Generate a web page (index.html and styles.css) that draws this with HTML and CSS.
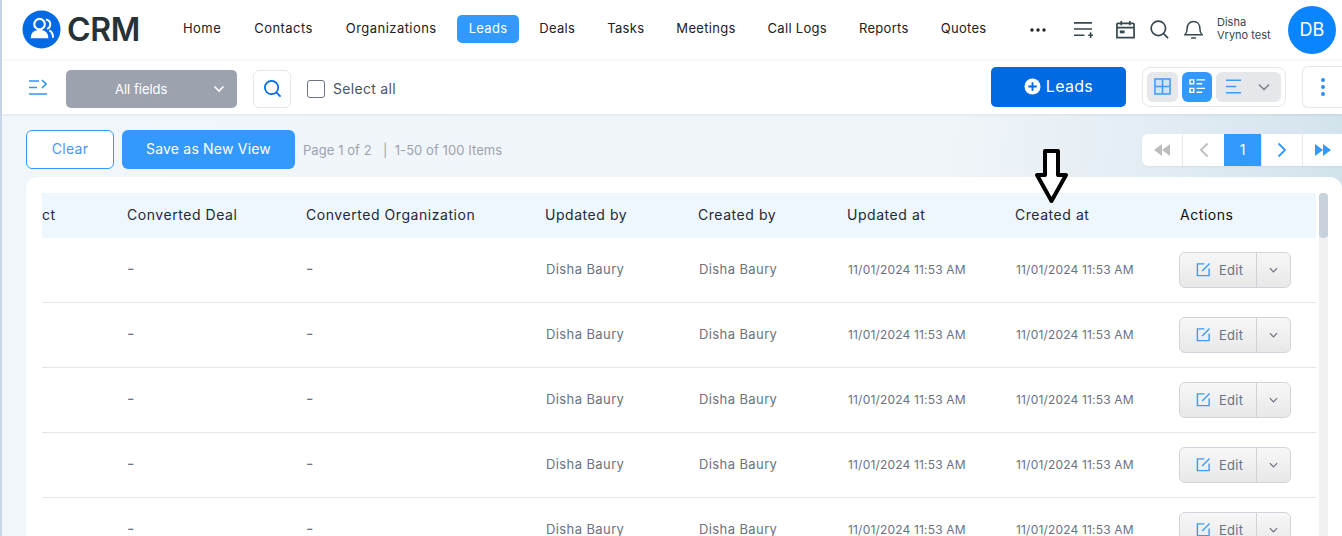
FILE: index.html
```html
<!DOCTYPE html>
<html lang="en">
<head>
<meta charset="utf-8">
<title>CRM Leads</title>
<link rel="stylesheet" href="styles.css">
</head>
<body>
<div class="page">
  <header class="topbar">
    <div class="logo">
      <svg class="logo-mark" viewBox="0 0 40 40"><circle cx="20" cy="20" r="19.5" fill="#0069e4"/><circle cx="18" cy="14.5" r="5.4" fill="none" stroke="#fff" stroke-width="2.2"/><path d="M9 29c0-6 3.500-8.500 9-8.500s9 2.500 9 8.500z" fill="#fff"/><path d="M24.500 9.800c3 .6 4.500 2.500 4.500 4.800s-1.300 4-3.300 4.700M28 21c2.600 1 3.800 3.500 3.800 7.500" fill="none" stroke="#fff" stroke-width="2"/></svg>
      <span class="logo-text">CRM</span>
    </div>
    <nav class="nav">
      <a class="nav-item">Home</a><a class="nav-item">Contacts</a><a class="nav-item">Organizations</a><a class="nav-item active">Leads</a><a class="nav-item">Deals</a><a class="nav-item">Tasks</a><a class="nav-item">Meetings</a><a class="nav-item">Call Logs</a><a class="nav-item">Reports</a><a class="nav-item">Quotes</a>
    </nav>
    <div class="top-tools">
      <svg class="more" viewBox="0 0 16 4"><circle cx="2" cy="2" r="1.700"/><circle cx="8" cy="2" r="1.700"/><circle cx="14" cy="2" r="1.700"/></svg>
      <svg class="tool tool-add" viewBox="0 0 20 20"><path d="M0 3h19M0 9.500h19M0 16h11M15 16h5M17.500 13v6" fill="none" stroke="#37474f" stroke-width="1.700"/></svg>
      <svg class="tool tool-cal" viewBox="0 0 20 20"><path d="M2 3.500h16a1 1 0 0 1 1 1v14H1v-14a1 1 0 0 1 1-1zM1 8h18M5.500 1v4.500M14.500 1v4.500" fill="none" stroke="#37474f" stroke-width="1.800"/><rect x="4" y="11" width="5" height="3" fill="#37474f"/></svg>
      <svg class="tool tool-search" viewBox="0 0 20 20"><circle cx="8.800" cy="8.800" r="7.600" fill="none" stroke="#37474f" stroke-width="1.800"/><path d="M14.500 14.500L19 19" stroke="#37474f" stroke-width="1.800"/></svg>
      <svg class="tool tool-bell" viewBox="0 0 20 20"><path d="M1 15.500c1.700-1.500 2.300-3 2.300-6.500 0-4.500 2.700-7.500 6.700-7.500s6.700 3 6.700 7.500c0 3.500.6 5 2.300 6.500zM7.500 19h5" fill="none" stroke="#37474f" stroke-width="1.600"/></svg>
      <div class="user-name">Disha<br>Vryno test</div>
      <div class="avatar">DB</div>
    </div>
  </header>

  <section class="toolbar">
    <div class="toolbar-left">
      <svg class="side-toggle" viewBox="0 0 18 16"><path d="M0 2h10M0 8.500h8M0 15h18M13 1l4 4-4 4" fill="none" stroke="#2f95fb" stroke-width="1.600"/></svg>
      <div class="field-select"><span>All fields</span><svg viewBox="0 0 12 8"><path d="M1.500 1.500L6 6l4.500-4.500" fill="none" stroke="#fff" stroke-width="1.600"/></svg></div>
      <button class="icon-btn"><svg viewBox="0 0 20 20"><circle cx="9" cy="9" r="7" fill="none" stroke="#0069e4" stroke-width="1.800"/><path d="M14 14l4.500 4.500" stroke="#0069e4" stroke-width="1.800"/></svg></button>
      <label class="select-all"><span class="checkbox"></span>Select all</label>
    </div>
    <div class="toolbar-right">
      <button class="add-btn"><svg viewBox="0 0 18 18"><circle cx="9" cy="9" r="8.500" fill="#fff"/><path d="M9 4.500v9M4.500 9h9" stroke="#0069e4" stroke-width="2"/></svg>Leads</button>
      <div class="view-group">
        <span class="view-btn"><svg viewBox="0 0 18 18"><path d="M1 1h16v16H1zM1 9h16M9 1v16" fill="#cfe4fb" stroke="#3d9bfa" stroke-width="1.600"/></svg></span>
        <span class="view-btn on"><svg viewBox="0 0 18 18"><path d="M1 2h4v4H1zM1 11h4v4H1zM8 2h9M8 6h6M8 11h9M8 15h6" fill="none" stroke="#fff" stroke-width="1.500"/></svg></span>
        <span class="view-btn wide"><svg viewBox="0 0 18 16"><path d="M1 1.500h16M1 8h11M1 14.500h16" fill="none" stroke="#3d9bfa" stroke-width="1.600"/></svg><svg class="wide-chev" viewBox="0 0 12 8"><path d="M1 1.500L6 6.500l5-5" fill="none" stroke="#7d8590" stroke-width="1.600"/></svg></span>
      </div>
      <button class="kebab"><svg viewBox="0 0 4 20"><circle cx="2" cy="3" r="2"/><circle cx="2" cy="10" r="2"/><circle cx="2" cy="17" r="2"/></svg></button>
    </div>
  </section>

  <main class="content">
    <div class="action-row">
      <button class="btn-clear">Clear</button>
      <button class="btn-save">Save as New View</button>
      <span class="page-info">Page 1 of 2 &nbsp;&nbsp;|&nbsp; 1-50 of 100 Items</span>
      <div class="pager">
        <span class="pg pg-first"><svg viewBox="0 0 18 12"><path d="M9 0v12L1 6zM17 0v12L9 6z" fill="#bdbdbd"/></svg></span>
        <span class="pg pg-prev"><svg viewBox="0 0 10 16"><path d="M8.500 1.500L2 8l6.500 6.500" fill="none" stroke="#bdbdbd" stroke-width="1.800"/></svg></span>
        <span class="pg current">1</span>
        <span class="pg pg-next"><svg viewBox="0 0 10 16"><path d="M1.500 1.500L8 8l-6.500 6.500" fill="none" stroke="#3399ff" stroke-width="1.800"/></svg></span>
        <span class="pg pg-last"><svg viewBox="0 0 18 12"><path d="M1 0v12l8-6zM9 0v12l8-6z" fill="#3399ff"/></svg></span>
      </div>
    </div>

    <div class="card">
      <div class="table">
        <div class="row head">
          <div class="cell">ct</div><div class="cell">Converted Deal</div><div class="cell">Converted Organization</div><div class="cell">Updated by</div><div class="cell">Created by</div><div class="cell">Updated at</div><div class="cell">Created at</div><div class="cell actions-head">Actions</div>
        </div>
        <div class="row">
          <div class="cell"></div><div class="cell dash">-</div><div class="cell dash">-</div><div class="cell name">Disha Baury</div><div class="cell name">Disha Baury</div><div class="cell date">11/01/2024 11:53 AM</div><div class="cell date">11/01/2024 11:53 AM</div>
          <div class="cell"><div class="edit"><span class="edit-main"><svg viewBox="0 0 16 16"><path d="M9 2H1.500v12.500H14V7M6.500 9.500L14.500 1.500" fill="none" stroke="#3d9bfa" stroke-width="1.500"/></svg>Edit</span><span class="edit-more"><svg viewBox="0 0 10 6"><path d="M1 1l4 4 4-4" fill="none" stroke="#6b7280" stroke-width="1.300"/></svg></span></div></div>
        </div>
        <div class="row">
          <div class="cell"></div><div class="cell dash">-</div><div class="cell dash">-</div><div class="cell name">Disha Baury</div><div class="cell name">Disha Baury</div><div class="cell date">11/01/2024 11:53 AM</div><div class="cell date">11/01/2024 11:53 AM</div>
          <div class="cell"><div class="edit"><span class="edit-main"><svg viewBox="0 0 16 16"><path d="M9 2H1.500v12.500H14V7M6.500 9.500L14.500 1.500" fill="none" stroke="#3d9bfa" stroke-width="1.500"/></svg>Edit</span><span class="edit-more"><svg viewBox="0 0 10 6"><path d="M1 1l4 4 4-4" fill="none" stroke="#6b7280" stroke-width="1.300"/></svg></span></div></div>
        </div>
        <div class="row">
          <div class="cell"></div><div class="cell dash">-</div><div class="cell dash">-</div><div class="cell name">Disha Baury</div><div class="cell name">Disha Baury</div><div class="cell date">11/01/2024 11:53 AM</div><div class="cell date">11/01/2024 11:53 AM</div>
          <div class="cell"><div class="edit"><span class="edit-main"><svg viewBox="0 0 16 16"><path d="M9 2H1.500v12.500H14V7M6.500 9.500L14.500 1.500" fill="none" stroke="#3d9bfa" stroke-width="1.500"/></svg>Edit</span><span class="edit-more"><svg viewBox="0 0 10 6"><path d="M1 1l4 4 4-4" fill="none" stroke="#6b7280" stroke-width="1.300"/></svg></span></div></div>
        </div>
        <div class="row">
          <div class="cell"></div><div class="cell dash">-</div><div class="cell dash">-</div><div class="cell name">Disha Baury</div><div class="cell name">Disha Baury</div><div class="cell date">11/01/2024 11:53 AM</div><div class="cell date">11/01/2024 11:53 AM</div>
          <div class="cell"><div class="edit"><span class="edit-main"><svg viewBox="0 0 16 16"><path d="M9 2H1.500v12.500H14V7M6.500 9.500L14.500 1.500" fill="none" stroke="#3d9bfa" stroke-width="1.500"/></svg>Edit</span><span class="edit-more"><svg viewBox="0 0 10 6"><path d="M1 1l4 4 4-4" fill="none" stroke="#6b7280" stroke-width="1.300"/></svg></span></div></div>
        </div>
        <div class="row">
          <div class="cell"></div><div class="cell dash">-</div><div class="cell dash">-</div><div class="cell name">Disha Baury</div><div class="cell name">Disha Baury</div><div class="cell date">11/01/2024 11:53 AM</div><div class="cell date">11/01/2024 11:53 AM</div>
          <div class="cell"><div class="edit"><span class="edit-main"><svg viewBox="0 0 16 16"><path d="M9 2H1.500v12.500H14V7M6.500 9.500L14.500 1.500" fill="none" stroke="#3d9bfa" stroke-width="1.500"/></svg>Edit</span><span class="edit-more"><svg viewBox="0 0 10 6"><path d="M1 1l4 4 4-4" fill="none" stroke="#6b7280" stroke-width="1.300"/></svg></span></div></div>
        </div>
      </div>
      <div class="scrollbar"><div class="thumb"></div></div>
    </div>
  </main>
</div>
<svg class="annotation" viewBox="0 0 36 58"><path d="M11 3h13v24h8L17.500 53 3 27h8z" fill="#fff" stroke="#000" stroke-width="4" stroke-linejoin="round"/></svg>
</body>
</html>
```

FILE: styles.css
```css
* { box-sizing: border-box; }
html, body { margin: 0; height: 536px; overflow: hidden; }
body {
  font-family: Inter, "Open Sans", "Liberation Sans", sans-serif;
  font-size: 13px;
  color: #1f2937;
  background: #fff;
  position: relative;
}
button { font-family: inherit; cursor: pointer; }
svg { display: block; flex: none; }

.page {
  height: 536px;
  border-left: 2px solid #c9d5ea;
  display: flex;
  flex-direction: column;
  background: linear-gradient(98deg, #f1f6fa 0%, #f0f5f9 68%, #dde9f1 88%, #cde0ea 100%);
}

/* top bar */
.topbar {
  height: 59px;
  flex: none;
  background: #fff;
  display: flex;
  align-items: center;
  padding-left: 20px;
  box-shadow: 0 1px 4px rgba(0, 0, 0, .06);
  position: relative;
  z-index: 2;
}
.logo { display: flex; align-items: center; gap: 6px; width: 149px; }
.logo-mark { width: 39px; height: 39px; }
.logo-text { font-size: 32px; font-weight: 600; color: #263238; letter-spacing: -.3px; }
.nav { display: flex; gap: 8px; font-size: 13px; letter-spacing: .3px; margin-top: -1px; }
.nav-item { padding: 0 12px; height: 28px; line-height: 27px; color: #212121; border-radius: 5px; white-space: nowrap; }
.nav-item:nth-child(-n+3) { letter-spacing: .45px; }
.nav-item:nth-child(2), .nav-item:nth-child(3) { margin-left: 1px; }
.nav-item.active { background: #3399ff; color: #fff; }
.top-tools { position: absolute; left: 1028px; top: 0; height: 59px; display: flex; align-items: center; }
.more { width: 16px; height: 4px; fill: #212121; }
.tool { width: 19px; height: 19px; margin-left: 15px; }
.tool-add { margin-left: 28px; }
.tool-cal { margin-left: 23px; }
.user-name { margin-left: 14px; width: 71px; font-size: 11px; line-height: 13px; color: #37474f; position: relative; top: -1px; }
.avatar { width: 48px; height: 48px; border-radius: 50%; background: #0a84ff; color: #fff; font-size: 18px; display: flex; align-items: center; justify-content: center; }

/* toolbar */
.toolbar {
  height: 55px;
  flex: none;
  background: #fff;
  display: flex;
  align-items: center;
  padding-left: 27px;
  box-shadow: 0 1px 3px rgba(0, 0, 0, .07);
  position: relative;
  z-index: 1;
}
.toolbar-left { display: flex; align-items: center; margin-top: 4px; }
.side-toggle { width: 18px; height: 16px; margin-top: -4px; }
.field-select {
  margin-left: 19px; width: 171px; height: 38px; border-radius: 5px; background: #9ca3af;
  color: #fff; display: flex; align-items: center; padding: 0 12px 0 49px; justify-content: space-between;
  font-size: 13px;
}
.field-select svg { width: 12px; height: 8px; }
.icon-btn { margin-left: 16px; width: 38px; height: 38px; background: #fff; border: 1px solid #e5e7eb; border-radius: 6px; display: flex; align-items: center; justify-content: center; padding: 0; }
.icon-btn svg { width: 19px; height: 19px; }
.select-all { margin-left: 16px; display: flex; align-items: center; gap: 8px; font-size: 14px; color: #4b5563; letter-spacing: .3px; }
.checkbox { width: 18px; height: 18px; border: 1px solid #6b7280; border-radius: 3px; background: #fff; }
.toolbar-right { margin-left: auto; display: flex; align-items: center; }
.add-btn { width: 135px; height: 40px; background: #0069e4; color: #fff; border: 0; border-radius: 5px; font-size: 16px; letter-spacing: .3px; display: flex; align-items: center; justify-content: center; gap: 5px; padding: 0 0 1px; }
.add-btn svg { width: 17px; height: 17px; }
.view-group { margin-left: 16px; width: 144px; height: 40px; border: 1px solid #e5e7eb; border-radius: 8px; display: flex; align-items: center; gap: 4px; padding-left: 4px; }
.view-btn { width: 31px; height: 30px; border-radius: 6px; background: #e5e7eb; display: flex; align-items: center; justify-content: center; }
.view-btn svg { width: 17px; height: 17px; }
.view-btn.on { background: #3399ff; width: 30px; }
.view-btn.wide { width: 65px; justify-content: flex-start; padding-left: 9px; }
.view-btn .wide-chev { width: 12px; height: 8px; margin-left: 16px; }
.kebab { margin-left: 16px; width: 40px; height: 42px; background: #fff; border: 1px solid #e5e7eb; border-right: 0; border-radius: 6px 0 0 6px; display: flex; align-items: center; justify-content: center; padding: 0; }
.kebab svg { width: 4px; height: 20px; fill: #2f8ff5; }

/* content */
.content { flex: 1; min-height: 0; padding: 16px 0 0 24px; display: flex; flex-direction: column; }
.action-row { display: flex; align-items: center; height: 39px; flex: none; }
.btn-clear { width: 88px; height: 39px; background: #fff; border: 1px solid #3399ff; border-radius: 6px; color: #4d94f5; font-size: 14px; letter-spacing: .3px; padding: 0 0 2px; }
.btn-save { margin-left: 8px; width: 173px; height: 39px; background: #3399ff; border: 0; border-radius: 6px; color: #fff; font-size: 14px; letter-spacing: .2px; padding: 0 0 2px; }
.page-info { margin-left: 8px; font-size: 13px; letter-spacing: .07px; color: #9ca3af; white-space: nowrap; }
.pager { margin-left: auto; display: flex; height: 32px; background: #fff; border-radius: 6px 0 0 6px; box-shadow: 0 1px 2px rgba(0, 0, 0, .05); }
.pg { border-left: 1px solid #e5e7eb; display: flex; align-items: center; justify-content: center; font-size: 14px; }
.pg svg { width: 18px; height: 12px; }
.pg-first { width: 40px; border-left: 0; }
.pg-prev { width: 42px; }
.pg-next { width: 41px; }
.pg-last { width: 40px; }
.pg-prev svg, .pg-next svg { width: 10px; height: 16px; }
.pg.current { background: #3399ff; color: #fff; width: 37px; border-left: 0; }

.card { margin-top: 8px; flex: 1; min-height: 0; background: #fff; border-radius: 12px 12px 0 0; padding: 16px 14px 0 16px; display: flex; gap: 3px; overflow: hidden; }
.table { width: 1274px; flex: none; overflow: hidden; }
.row { display: grid; grid-template-columns: 85px 179px 240px 153px 149px 168px 163px 137px; height: 65px; border-bottom: 1px solid #e3e5e9; align-items: center; color: #6b7280; font-size: 13px; }
.row.head { height: 45px; background: #eef6fe; border-bottom: 0; color: #1f2937; font-size: 14px; letter-spacing: .55px; padding-bottom: 3px; }
.row.head .cell:nth-child(n+4):nth-child(-n+7) { margin-left: -1px; }
.row.head .actions-head { color: #111; padding-left: 1px; }
.cell { white-space: nowrap; }
.cell.dash { font-size: 16px; position: relative; top: -2px; }
.cell.name { letter-spacing: .4px; position: relative; top: -1px; }
.cell.date { font-size: 12px; letter-spacing: .18px; position: relative; top: -1px; }
.edit { width: 112px; height: 36px; border: 1px solid #d1d5db; border-radius: 6px; background: linear-gradient(#f7f7f7, #e8e8e8); display: flex; color: #6b7280; letter-spacing: .3px; }
.edit-main { width: 77px; border-right: 1px solid #cfd2d6; display: flex; align-items: center; padding: 0 0 1px 16px; gap: 8px; }
.edit-main svg { width: 15px; height: 15px; }
.edit-more { flex: 1; display: flex; align-items: center; justify-content: center; }
.edit-more svg { width: 9px; height: 6px; }
.scrollbar { width: 9px; flex: none; background: #f1f1f1; border-radius: 4px 4px 0 0; }
.thumb { height: 45px; background: #c8d2dc; border-radius: 4px; }

.annotation { position: absolute; left: 1034px; top: 148px; width: 36px; height: 58px; }
```
